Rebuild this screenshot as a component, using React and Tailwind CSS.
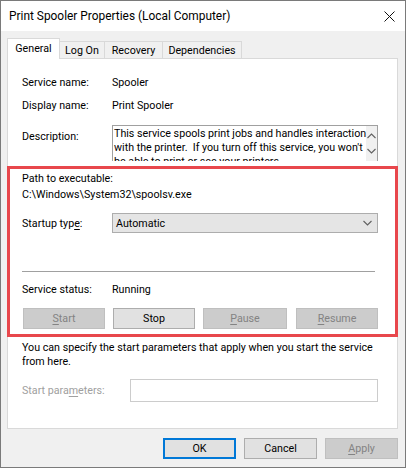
import React from "react";

const Chevron = ({ up = false, className = "" }) => (
  <svg width="9" height="6" viewBox="0 0 9 6" className={className}>
    <path
      d={up ? "M0.5 5 L4.5 1 L8.5 5" : "M0.5 1 L4.5 5 L8.5 1"}
      fill="none"
      stroke="#606060"
      strokeWidth="1.1"
    />
  </svg>
);

const Tab = ({ label, active = false, w }) =>
  active ? (
    <div
      className={`${w} relative z-10 -mb-px flex h-[21px] items-center justify-center border border-b-0 border-[#d9d9d9] bg-white pb-[2px]`}
    >
      {label}
    </div>
  ) : (
    <div
      className={`${w} -ml-px flex h-[17px] items-center justify-center border border-b-0 border-[#d9d9d9] bg-[#f0f0f0]`}
    >
      {label}
    </div>
  );

const Btn = ({ children, w, disabled = false, focus = false }) => (
  <div
    className={`${w} flex h-[21px] items-center justify-center ${
      disabled
        ? "border border-[#bfbfbf] bg-[#cccccc] text-[#838383]"
        : focus
        ? "border-2 border-[#0078d7] bg-[#e1e1e1] text-black"
        : "border border-[#adadad] bg-[#e1e1e1] text-black"
    }`}
  >
    {children}
  </div>
);

export default function App() {
  return (
    <div
      className="relative flex h-[468px] w-[406px] flex-col border border-[#7a7a7a] bg-[#f0f0f0] text-[10.7px] leading-[15px] text-black"
      style={{ fontFamily: "Roboto, 'Liberation Sans', sans-serif" }}
    >
      {/* Title bar */}
      <div className="flex h-[30px] items-center justify-between bg-white pl-[8px] pr-[10px]">
        <span className="text-[11.9px] text-black">
          Print Spooler Properties (Local Computer)
        </span>
        <svg width="11" height="11" viewBox="0 0 11 11">
          <path d="M0.5 0.5 L10.5 10.5 M10.5 0.5 L0.5 10.5" stroke="#111" strokeWidth="1" />
        </svg>
      </div>

      {/* Body */}
      <div className="flex flex-col pl-[6px]">
        {/* Tabs */}
        <div className="mt-[7px] flex h-[20px] items-end">
          <Tab label="General" active w="w-[53px]" />
          <Tab label="Log On" w="w-[46px]" />
          <Tab label="Recovery" w="w-[59px]" />
          <Tab label="Dependencies" w="w-[80px]" />
        </div>

        {/* Panel */}
        <div className="flex h-[371px] w-[391px] flex-col border border-[#d9d9d9] bg-white pl-[14px]">
          <div className="mt-[16px] flex h-[15px]">
            <span className="w-[90px]">Service name:</span>
            <span>Spooler</span>
          </div>
          <div className="mt-[8px] flex h-[15px]">
            <span className="w-[90px]">Display name:</span>
            <span>Print Spooler</span>
          </div>
          <div className="mt-[12px] flex h-[36px] items-start">
            <span className="mt-[4px] w-[90px]">Description:</span>
            <div className="flex h-[36px] w-[266px] overflow-hidden border border-b-0 border-[#a0a0a0]">
              <div className="flex-1 whitespace-pre pl-[1px] pt-[1px] leading-[14px]">
                {"This service spools print jobs and handles interaction\nwith the printer.  If you turn off this service, you won't\nbe able to print or see your printers."}
              </div>
              <div className="flex w-[16px] flex-col items-center bg-[#f0f0f0] pt-[7px]">
                <Chevron up />
                <Chevron className="mt-[9px]" />
              </div>
            </div>
          </div>

          <div className="mt-[10px] h-[15px]">Path to executable:</div>
          <div className="mt-[1px] h-[15px]">C:\Windows\System32\spoolsv.exe</div>

          <div className="mt-[11px] flex h-[20px] items-center">
            <span className="w-[90px]">
              Startup typ<u className="underline-offset-2">e</u>:
            </span>
            <div className="flex h-[20px] w-[266px] items-center justify-between border border-[#adadad] bg-[#e5e5e5] pl-[3px] pr-[5px]">
              <span>Automatic</span>
              <Chevron />
            </div>
          </div>

          <div className="mt-[38px] h-px w-[353px] bg-[#a0a0a0]" />

          <div className="mt-[10px] flex h-[15px]">
            <span className="w-[90px]">Service status:</span>
            <span>Running</span>
          </div>

          <div className="mt-[11px] flex pl-[1px]">
            <Btn w="w-[82px]" disabled>
              <span><u className="underline-offset-2">S</u>tart</span>
            </Btn>
            <div className="ml-[8px]">
              <Btn w="w-[82px]">
                <span>Stop</span>
              </Btn>
            </div>
            <div className="ml-[8px]">
              <Btn w="w-[84px]" disabled>
                <span><u className="underline-offset-2">P</u>ause</span>
              </Btn>
            </div>
            <div className="ml-[9px]">
              <Btn w="w-[82px]" disabled>
                <span><u className="underline-offset-2">R</u>esume</span>
              </Btn>
            </div>
          </div>

          <div className="mt-[12px] leading-[14px]">
            You can specify the start parameters that apply when you start the service
            <br />
            from here.
          </div>

          <div className="mt-[10px] flex h-[23px] items-center">
            <span className="w-[108px] text-[#a0a0a0]">
              Start para<u className="underline-offset-2">m</u>eters:
            </span>
            <div className="h-[23px] w-[248px] border border-[#cccccc] bg-white" />
          </div>
        </div>

        {/* Footer buttons */}
        <div className="mt-[9px] flex justify-end gap-[8px] pr-[7px]">
          <Btn w="w-[73px]" focus>
            OK
          </Btn>
          <Btn w="w-[73px]">Cancel</Btn>
          <Btn w="w-[73px]" disabled>
            <span><u className="underline-offset-2">A</u>pply</span>
          </Btn>
        </div>
      </div>

      {/* Red annotation box */}
      <div className="absolute left-[6px] top-[165px] h-[171px] w-[391px] border-[3px] border-[#e8474c]" />
    </div>
  );
}
